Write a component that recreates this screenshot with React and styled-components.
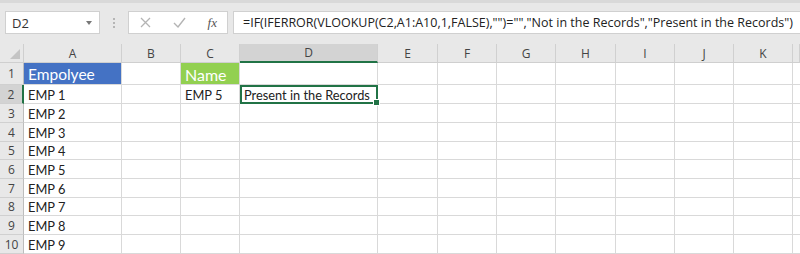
import React from 'react';
import styled, { createGlobalStyle } from 'styled-components';

const Global = createGlobalStyle`
  html, body {
    margin: 0;
    padding: 0;
    background: #ffffff;
  }
  * {
    box-sizing: border-box;
  }
`;

const Page = styled.div`
  width: 800px;
  height: 254px;
  overflow: hidden;
  background: #ffffff;
  font-family: "Open Sans", "Noto Sans", sans-serif;
`;

const Toolbar = styled.div`
  height: 44px;
  background: #e8e8e8;
  border-top: 3px solid #d9d9d9;
  display: flex;
  align-items: center;
  padding: 0 0 2px 5px;
`;

const NameBox = styled.div`
  width: 95px;
  height: 23px;
  background: #ffffff;
  border: 1px solid #d0d0d0;
  display: flex;
  align-items: center;
  justify-content: space-between;
  padding: 0 7px 0 6px;
  font-size: 13px;
  color: #333;
`;

const Caret = styled.span`
  width: 0;
  height: 0;
  border-left: 3px solid transparent;
  border-right: 3px solid transparent;
  border-top: 4px solid #777;
`;

const Grip = styled.div`
  width: 28px;
  display: flex;
  flex-direction: column;
  align-items: center;
  gap: 2px;
  span {
    width: 2px;
    height: 2px;
    background: #b5b5b5;
  }
`;

const FxButtons = styled.div`
  width: 100px;
  height: 23px;
  background: #ffffff;
  border: 1px solid #d0d0d0;
  display: flex;
  align-items: center;
  justify-content: space-between;
  padding: 0 10px 0 11px;
`;

const Fx = styled.span`
  font-family: "Liberation Serif", "DejaVu Serif", serif;
  font-style: italic;
  font-size: 13px;
  color: #555;
`;

const FormulaInput = styled.div`
  flex: 1;
  height: 23px;
  margin-left: 5px;
  background: #ffffff;
  border: 1px solid #d0d0d0;
  border-right: none;
  display: flex;
  align-items: center;
  padding-left: 9px;
  font-size: 12.5px;
  color: #222;
  white-space: nowrap;
  overflow: hidden;
`;

const Sheet = styled.div`
  display: grid;
  grid-template-columns: 24px 98px 59px 59px 138px 60px 59px 59px 60px 59px 59px 59px 7px;
`;

const Corner = styled.div`
  height: 19px;
  background: #e8e8e8;
  border-right: 1px solid #cfcfcf;
  border-bottom: 1px solid #cfcfcf;
  position: relative;
  &::after {
    content: '';
    position: absolute;
    right: 3px;
    bottom: 3px;
    width: 0;
    height: 0;
    border-left: 10px solid transparent;
    border-bottom: 10px solid #c4c4c4;
  }
`;

const ColHeader = styled.div`
  height: 19px;
  background: ${p => (p.$active ? '#d3d3d3' : '#e8e8e8')};
  border-right: 1px solid #d0d0d0;
  border-bottom: ${p => (p.$active ? '2px solid #217346' : '1px solid #cfcfcf')};
  display: flex;
  align-items: center;
  justify-content: center;
  font-size: 12px;
  color: #444;
`;

const RowHeader = styled.div`
  height: ${p => p.$h}px;
  background: ${p => (p.$active ? '#d3d3d3' : '#e8e8e8')};
  border-right: ${p => (p.$active ? '2px solid #217346' : '1px solid #bdbdbd')};
  border-bottom: 1px solid #d0d0d0;
  display: flex;
  align-items: center;
  justify-content: center;
  font-size: 12px;
  color: #444;
`;

const Cell = styled.div`
  height: ${p => p.$h}px;
  background: ${p => p.$bg || '#ffffff'};
  color: ${p => p.$color || '#222'};
  font-family: "Lato", "Open Sans", sans-serif;
  font-size: ${p => p.$size || 12.8}px;
  border-right: 1px solid #d9d9d9;
  border-bottom: 1px solid #d9d9d9;
  display: flex;
  align-items: center;
  padding: 1px 3px 0 4px;
  white-space: nowrap;
  position: relative;
  ${p =>
    p.$selected &&
    `
    outline: 2px solid #217346;
    outline-offset: -2px;
    &::after {
      content: '';
      position: absolute;
      right: -3px;
      bottom: -3px;
      width: 5px;
      height: 5px;
      background: #217346;
      border: 1px solid #ffffff;
      z-index: 2;
    }
  `}
`;

const cols = ['A', 'B', 'C', 'D', 'E', 'F', 'G', 'H', 'I', 'J', 'K', ''];
const heights = [22, 19, 19, 19, 18, 19, 19, 18, 19, 19];

const cellProps = (r, c) => {
  if (r === 0 && c === 0) return { text: 'Empolyee', $bg: '#4472c4', $color: '#ffffff', $size: 15.5 };
  if (r === 0 && c === 2) return { text: 'Name', $bg: '#92d050', $color: '#ffffff', $size: 16 };
  if (r === 1 && c === 2) return { text: 'EMP 5' };
  if (r === 1 && c === 3) return { text: 'Present in the Records', $selected: true };
  if (c === 0 && r > 0) return { text: `EMP ${r}` };
  return { text: '' };
};

const App = () => (
  <Page>
    <Global />
    <Toolbar>
      <NameBox>
        D2
        <Caret />
      </NameBox>
      <Grip>
        <span />
        <span />
        <span />
      </Grip>
      <FxButtons>
        <svg width="11" height="11" viewBox="0 0 11 11">
          <path d="M1 1 L10 10 M10 1 L1 10" stroke="#b4b4b4" strokeWidth="1.3" fill="none" />
        </svg>
        <svg width="13" height="11" viewBox="0 0 13 11">
          <path d="M1 6 L5 10 L12 1" stroke="#b4b4b4" strokeWidth="1.4" fill="none" />
        </svg>
        <Fx>fx</Fx>
      </FxButtons>
      <FormulaInput>
        =IF(IFERROR(VLOOKUP(C2,A1:A10,1,FALSE),"")="","Not in the Records","Present in the Records")
      </FormulaInput>
    </Toolbar>
    <Sheet>
      <Corner />
      {cols.map((c, i) => (
        <ColHeader key={i} $active={c === 'D'}>
          {c}
        </ColHeader>
      ))}
      {heights.map((h, r) => (
        <React.Fragment key={r}>
          <RowHeader $h={h} $active={r === 1}>
            {r + 1}
          </RowHeader>
          {cols.map((c, ci) => {
            const { text, ...rest } = cellProps(r, ci);
            return (
              <Cell key={ci} $h={h} {...rest}>
                {text}
              </Cell>
            );
          })}
        </React.Fragment>
      ))}
    </Sheet>
  </Page>
);

export default App;
